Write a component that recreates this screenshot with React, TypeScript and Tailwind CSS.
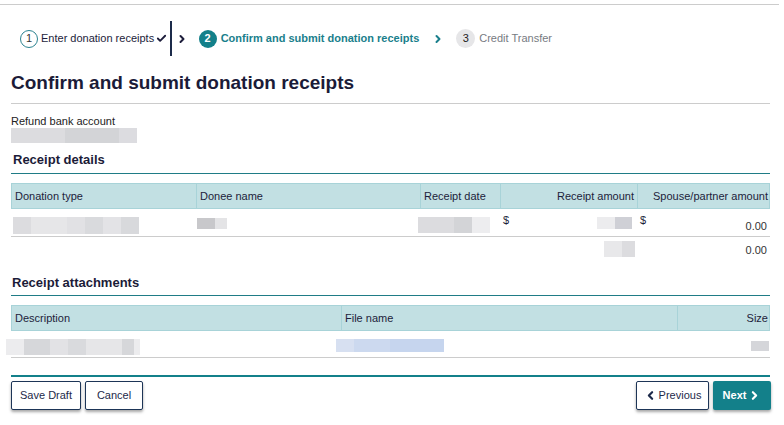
import React from 'react';
import { Check, ChevronRight, ChevronLeft } from 'lucide-react';

type Seg = [number, string];

// redacted values rendered as flat grey blocks
function Blur({ segs, h }: { segs: Seg[]; h: number }) {
  return (
    <div className="flex" style={{ height: h }}>
      {segs.map(([w, c], i) => (
        <div key={i} style={{ width: w, background: c }} />
      ))}
    </div>
  );
}

const headCell = 'flex items-center px-[3px] border-l border-[#a8d3d8] first:border-l-0';

export default function App() {
  return (
    <div className="w-[784px] h-[425px] bg-white text-[11px] text-[#1d1d3b] font-['Liberation_Sans',Arial,sans-serif] overflow-hidden">
      <div className="mt-[4px] mr-[5px] border-t border-[#cccccc]" />

      <div className="pl-[11px] pr-[14px]">
        {/* Stepper */}
        <div className="mt-[16px] h-[35px] ml-[9px] flex items-center">
          <div className="w-[18px] h-[18px] rounded-full border border-[#2b8390] flex items-center justify-center text-[#333]">
            1
          </div>
          <span className="ml-[3px]">Enter donation receipts</span>
          <Check className="ml-[2px] w-[11px] h-[11px] text-[#1d1d3b]" strokeWidth={4} />
          <div className="ml-[3px] w-[1.5px] h-[35px] bg-[#1c2b4a]" />
          <ChevronRight className="ml-[4px] w-[12px] h-[12px] text-[#1d1d3b]" strokeWidth={4} />
          <div className="ml-[11px] w-[18px] h-[18px] rounded-full bg-[#13808a] flex items-center justify-center text-white font-bold">
            2
          </div>
          <span className="ml-[4px] font-bold text-[#1a7f8c]">Confirm and submit donation receipts</span>
          <ChevronRight className="ml-[13px] w-[12px] h-[12px] text-[#1a7f8c]" strokeWidth={4} />
          <div className="ml-[12px] w-[19px] h-[19px] rounded-full bg-[#e6e6e8] flex items-center justify-center text-[#222]">
            3
          </div>
          <span className="ml-[4px] text-[#777b82]">Credit Transfer</span>
        </div>

        {/* Title */}
        <h1 className="mt-[15px] text-[19px] leading-[24px] font-bold text-[#1b1b38] pb-[8px] border-b border-[#cccccc]">
          Confirm and submit donation receipts
        </h1>

        <div className="mt-[10px] leading-[14px] text-[#222]">Refund bank account</div>
        <Blur
          h={15}
          segs={[
            [54, '#dcdcdf'],
            [54, '#d3d4d7'],
            [18, '#dcdce0'],
          ]}
        />

        {/* Receipt details */}
        <h2 className="mt-[9px] pl-[2px] text-[13px] leading-[16px] font-bold text-[#1b1b38] pb-[5px] border-b border-[#1f7c86]">
          Receipt details
        </h2>

        <div className="mt-[9px]">
          <div className="grid grid-cols-[184px_224px_80px_137px_134px] h-[26px] bg-[#c2e0e3] border border-[#a8d3d8]">
            <div className={headCell}>Donation type</div>
            <div className={headCell}>Donee name</div>
            <div className={headCell}>Receipt date</div>
            <div className={`${headCell} justify-end`}>Receipt amount</div>
            <div className={`${headCell} justify-end`}>Spouse/partner amount</div>
          </div>

          <div className="grid grid-cols-[184px_224px_80px_137px_134px] h-[28px] border-b border-[#cccccc]">
            <div className="pl-[2px] pt-[8px]">
              <Blur
                h={17}
                segs={[
                  [18, '#dcdcdf'],
                  [36, '#e6e6e8'],
                  [18, '#e1e1e4'],
                  [18, '#d9dadd'],
                  [18, '#e3e3e6'],
                  [18, '#d8d9dc'],
                ]}
              />
            </div>
            <div className="pl-[2px] pt-[9px]">
              <Blur h={11} segs={[[18, '#c8c8cb'], [12, '#e4e4e6']]} />
            </div>
            <div className="-ml-[1px] pt-[8px]">
              <Blur h={16} segs={[[36, '#dcdcdf'], [18, '#d3d4d7'], [18, '#ededef']]} />
            </div>
            <div className="flex justify-between pl-[4px] pr-[4px] pt-[5px]">
              <span className="leading-[12px] text-[#1d1d3b]">$</span>
              <div className="pt-[3px]">
                <Blur h={12} segs={[[18, '#ececee'], [17, '#cfd0d6']]} />
              </div>
            </div>
            <div className="flex justify-between pl-[4px] pr-[3px] pt-[5px]">
              <span className="leading-[12px] text-[#1d1d3b]">$</span>
              <span className="pt-[4px] leading-[16px] text-[#333]">0.00</span>
            </div>
          </div>

          <div className="grid grid-cols-[184px_224px_80px_137px_134px] h-[26px]">
            <div />
            <div />
            <div />
            <div className="flex justify-end pr-[1px] pt-[4px]">
              <Blur h={16} segs={[[18, '#e8e8ea'], [13, '#dcdcdf']]} />
            </div>
            <div className="flex justify-end items-center pr-[3px] text-[#333]">0.00</div>
          </div>
        </div>

        {/* Receipt attachments */}
        <h2 className="mt-[12px] pl-[1px] text-[13px] leading-[16px] font-bold text-[#1b1b38] pb-[4px] border-b border-[#1f7c86]">
          Receipt attachments
        </h2>

        <div className="mt-[9px]">
          <div className="grid grid-cols-[329px_336px_94px] h-[26px] bg-[#c2e0e3] border border-[#a8d3d8]">
            <div className={headCell}>Description</div>
            <div className={headCell}>File name</div>
            <div className={`${headCell} justify-end`}>Size</div>
          </div>
          <div className="grid grid-cols-[329px_336px_94px] h-[27px] border-b border-[#cccccc]">
            <div className="-ml-[5px] pt-[8px]">
              <Blur
                h={16}
                segs={[
                  [18, '#ececee'],
                  [26, '#d6d7da'],
                  [18, '#e2e2e5'],
                  [18, '#d9dadd'],
                  [36, '#e6e6e8'],
                  [12, '#d6d7da'],
                  [6, '#ececee'],
                ]}
              />
            </div>
            <div className="-ml-[4px] pt-[8px]">
              <Blur h={13} segs={[[18, '#d7e0f1'], [36, '#ccd9ef'], [54, '#c6d5ee']]} />
            </div>
            <div className="flex justify-end pr-[1px] pt-[10px]">
              <Blur h={10} segs={[[18, '#d5d6da']]} />
            </div>
          </div>
        </div>

        {/* Footer actions */}
        <div className="mt-[17px] border-t-2 border-[#13808a]" />
        <div className="mt-[4px] flex justify-between">
          <div className="flex gap-[4px]">
            <button className="w-[70px] h-[29px] bg-white border-[1.5px] border-[#1d3557] rounded-[2px] shadow-[0_2px_3px_rgba(0,0,0,0.35)] text-[#1d2a4a]">
              Save Draft
            </button>
            <button className="w-[58px] h-[29px] bg-white border-[1.5px] border-[#1d3557] rounded-[2px] shadow-[0_2px_3px_rgba(0,0,0,0.35)] text-[#1d2a4a]">
              Cancel
            </button>
          </div>
          <div className="flex gap-[4px] -mr-[1px]">
            <button className="w-[73px] h-[29px] bg-white border-[1.5px] border-[#1d3557] rounded-[2px] shadow-[0_2px_3px_rgba(0,0,0,0.35)] text-[#1d2a4a] flex items-center justify-center gap-[2px]">
              <ChevronLeft className="w-[13px] h-[13px]" strokeWidth={4} />
              Previous
            </button>
            <button className="w-[58px] h-[29px] bg-[#13808a] rounded-[2px] shadow-[0_2px_3px_rgba(0,0,0,0.35)] text-white font-bold flex items-center justify-center gap-[2px]">
              Next
              <ChevronRight className="w-[13px] h-[13px]" strokeWidth={4} />
            </button>
          </div>
        </div>
      </div>
    </div>
  );
}
